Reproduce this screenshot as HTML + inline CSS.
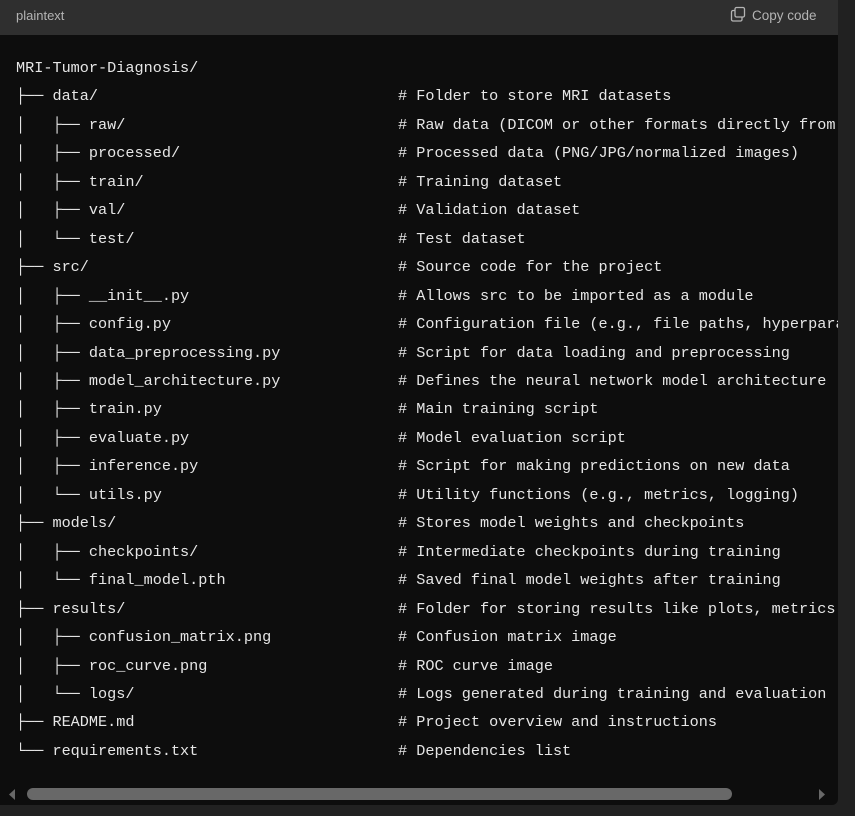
<!DOCTYPE html>
<html><head><meta charset="utf-8"><style>
html,body{margin:0;padding:0;background:#212121;width:855px;height:816px;overflow:hidden}
.box{position:absolute;left:0;top:0;width:838px;height:805px;background:#0d0d0d;border-radius:0 0 6px 0;overflow:hidden}
.hd{position:absolute;left:0;top:0;width:838px;height:35px;background:#2f2f2f;font-family:"Liberation Sans",sans-serif;color:#b4b4b4}
.lang{position:absolute;left:16px;top:8px;font-size:13px}
.copy{position:absolute;left:752px;top:8px;font-size:13.5px}
.code{position:absolute;left:0;top:54px;font-family:"Liberation Mono",monospace;font-size:15.2px;color:#e6e6e6}
.l{position:relative;height:28.46px;line-height:28.46px;white-space:pre}
.l .t{position:absolute;left:16px}
.l .c{position:absolute;left:398px}
.sb{position:absolute;left:27px;top:788px;width:705px;height:12px;border-radius:6px;background:#686868}
</style></head><body>
<div class="box">
<div class="hd"><span class="lang">plaintext</span>
<svg style="position:absolute;left:730px;top:6px" width="16" height="16" viewBox="0 0 16 16" fill="none" stroke="#b4b4b4" stroke-width="1.3"><rect x="5" y="1.5" width="9.5" height="9.5" rx="1.5"/><path d="M5 4.5H3a1.5 1.5 0 0 0-1.5 1.5v7.5A1.5 1.5 0 0 0 3 15h7.5a1.5 1.5 0 0 0 1.5-1.5V11"/></svg>
<span class="copy">Copy code</span></div>
<div class="code">
<div class="l"><span class="t">MRI-Tumor-Diagnosis/</span></div>
<div class="l"><span class="t">├── data/</span><span class="c"># Folder to store MRI datasets</span></div>
<div class="l"><span class="t">│   ├── raw/</span><span class="c"># Raw data (DICOM or other formats directly from</span></div>
<div class="l"><span class="t">│   ├── processed/</span><span class="c"># Processed data (PNG/JPG/normalized images)</span></div>
<div class="l"><span class="t">│   ├── train/</span><span class="c"># Training dataset</span></div>
<div class="l"><span class="t">│   ├── val/</span><span class="c"># Validation dataset</span></div>
<div class="l"><span class="t">│   └── test/</span><span class="c"># Test dataset</span></div>
<div class="l"><span class="t">├── src/</span><span class="c"># Source code for the project</span></div>
<div class="l"><span class="t">│   ├── __init__.py</span><span class="c"># Allows src to be imported as a module</span></div>
<div class="l"><span class="t">│   ├── config.py</span><span class="c"># Configuration file (e.g., file paths, hyperparameters)</span></div>
<div class="l"><span class="t">│   ├── data_preprocessing.py</span><span class="c"># Script for data loading and preprocessing</span></div>
<div class="l"><span class="t">│   ├── model_architecture.py</span><span class="c"># Defines the neural network model architecture</span></div>
<div class="l"><span class="t">│   ├── train.py</span><span class="c"># Main training script</span></div>
<div class="l"><span class="t">│   ├── evaluate.py</span><span class="c"># Model evaluation script</span></div>
<div class="l"><span class="t">│   ├── inference.py</span><span class="c"># Script for making predictions on new data</span></div>
<div class="l"><span class="t">│   └── utils.py</span><span class="c"># Utility functions (e.g., metrics, logging)</span></div>
<div class="l"><span class="t">├── models/</span><span class="c"># Stores model weights and checkpoints</span></div>
<div class="l"><span class="t">│   ├── checkpoints/</span><span class="c"># Intermediate checkpoints during training</span></div>
<div class="l"><span class="t">│   └── final_model.pth</span><span class="c"># Saved final model weights after training</span></div>
<div class="l"><span class="t">├── results/</span><span class="c"># Folder for storing results like plots, metrics</span></div>
<div class="l"><span class="t">│   ├── confusion_matrix.png</span><span class="c"># Confusion matrix image</span></div>
<div class="l"><span class="t">│   ├── roc_curve.png</span><span class="c"># ROC curve image</span></div>
<div class="l"><span class="t">│   └── logs/</span><span class="c"># Logs generated during training and evaluation</span></div>
<div class="l"><span class="t">├── README.md</span><span class="c"># Project overview and instructions</span></div>
<div class="l"><span class="t">└── requirements.txt</span><span class="c"># Dependencies list</span></div>
</div>
<svg style="position:absolute;left:6px;top:788px" width="10" height="13"><path d="M9 1L3 6.5L9 12Z" fill="#686868"/></svg>
<div class="sb"></div>
<svg style="position:absolute;left:818px;top:788px" width="10" height="13"><path d="M1 1L7 6.5L1 12Z" fill="#686868"/></svg>
</div>
</body></html>
